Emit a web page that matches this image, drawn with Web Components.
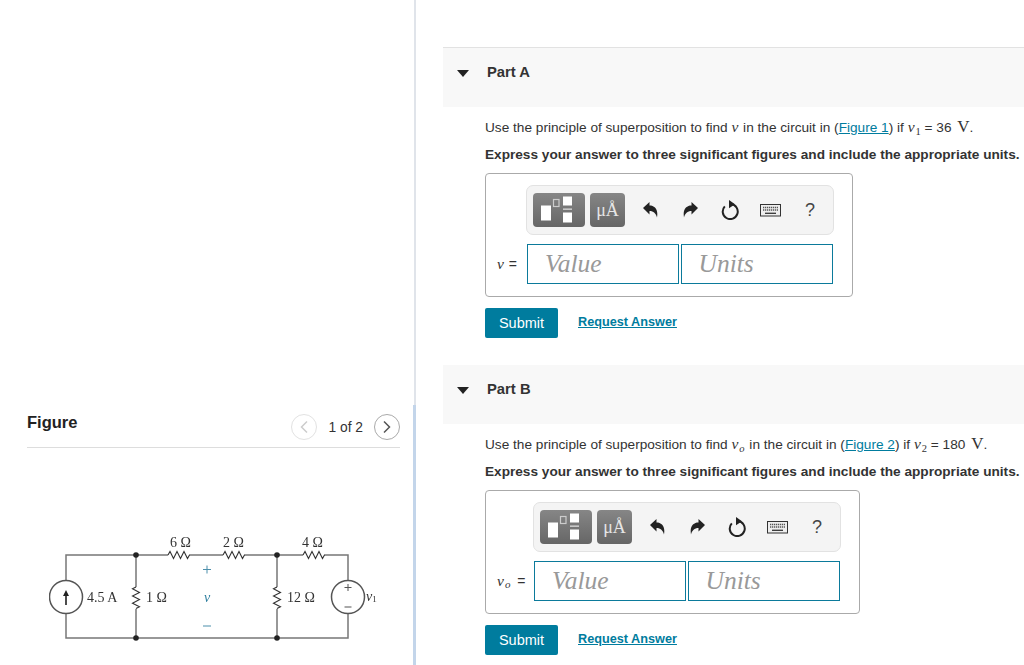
<!DOCTYPE html>
<html>
<head>
<meta charset="utf-8">
<style>
  html, body { margin: 0; height: 100%; overflow: hidden; background: #fff; }
  body { font-family: "Liberation Sans", Arial, sans-serif; }
  #page { display: flex; height: 665px; }
</style>
</head>
<body>
<div id="page">
  <figure-pane></figure-pane>
  <div style="flex:1;min-width:0;overflow:hidden;padding:47px 0 0 27px;">
    <question-part title="Part A" figure="Figure 1" label="v" value="36" src="1"></question-part>
    <question-part title="Part B" figure="Figure 2" label="v" sub="o" value="180" src="2"></question-part>
  </div>
</div>

<script>
const MATH = `"Liberation Serif", "Times New Roman", serif`;

class CircuitDiagram extends HTMLElement {
  constructor() {
    super();
    this.attachShadow({mode: 'open'});
    const zig = (x, y) => `M${x} ${y}l2 -3.5 3.5 7 3.5 -7 3.5 7 3.5 -7 3.5 7 2 -3.5`;
    const zagv = (x, y) => `M${x} ${y}l-3.5 1.8 7 3.6 -7 3.6 7 3.6 -7 3.6 7 3.6 -3.5 1.8`;
    this.shadowRoot.innerHTML = `
      <style>
        :host { display: block; }
        svg { display: block; }
        text { font-family: ${MATH}; fill: #333; font-size: 14px; }
        .blue { fill: #2f7f9f; }
      </style>
      <svg width="415" height="145" viewBox="0 520 415 145">
        <g filter="url(#soft)">
        <g fill="none" stroke="#777" stroke-width="1.5">
          <path d="M66 579V554H168M189 554H223M244 554H303M324 554H348V579.500M348 612.500V637H66V613"/>
          <path d="M136 554V586M136 608V637M277 554V586M277 608V637"/>
          <circle cx="66" cy="596" r="16.500" stroke="#555"/>
          <circle cx="348" cy="596" r="16.500" stroke="#555"/>
        </g>
        <g fill="none" stroke="#333" stroke-width="1.100">
          <path d="${zig(168, 554)}"/>
          <path d="${zig(223, 554)}"/>
          <path d="${zig(303, 554)}"/>
          <path d="${zagv(136, 586)}"/>
          <path d="${zagv(277, 586)}"/>
        </g>
        <g fill="#222">
          <circle cx="136" cy="554" r="2.800"/>
          <circle cx="277" cy="554" r="2.800"/>
          <circle cx="136" cy="637" r="2.800"/>
          <circle cx="277" cy="637" r="2.800"/>
          <path d="M66 589l3 6h-2.200v9h-1.600v-9H63z"/>
        </g>
        <g stroke="#555" stroke-width="1" fill="none">
          <path d="M344.500 586.500h7M348 583v7M344.500 606h7"/>
        </g>
        <g stroke="#4d8fab" stroke-width="1" fill="none">
          <path d="M203 568.500h8M207 564.500v8M203 625h8"/>
        </g>
        <text x="170" y="546">6 Ω</text>
        <text x="223" y="546">2 Ω</text>
        <text x="302" y="546">4 Ω</text>
        <text x="87" y="601">4.5 A</text>
        <text x="146" y="601">1 Ω</text>
        <text x="287" y="601">12 Ω</text>
        <text class="blue" x="204" y="601" font-style="italic">v</text>
        <text x="366" y="600" font-style="italic">v<tspan font-size="9" font-style="normal" dy="1">1</tspan></text>
        </g>
        <defs><filter id="soft" x="0" y="0" width="100%" height="100%"><feGaussianBlur stdDeviation="0.350"/></filter></defs>
      </svg>`;
  }
}
customElements.define('circuit-diagram', CircuitDiagram);

class FigurePane extends HTMLElement {
  constructor() {
    super();
    this.attachShadow({mode: 'open'});
    this.shadowRoot.innerHTML = `
      <style>
        :host {
          display: block;
          flex: none;
          width: 414px;
          height: 665px;
          border-right: 2px solid #e0e4ea;
          position: relative;
        }
        .accent {
          position: absolute;
          right: -2px;
          top: 405px;
          bottom: 0;
          width: 3px;
          background: #c3d5ea;
        }
        .head {
          display: flex;
          align-items: center;
          margin: 411px 14px 0 27px;
          height: 36px;
          border-bottom: 1px solid #ddd;
        }
        h2 {
          margin: 0 auto 0 0;
          font-size: 16.500px;
          font-weight: 700;
          color: #222;
          position: relative;
          top: -7px;
        }
        .pager { display: flex; align-items: center; font-size: 13.800px; color: #333; position: relative; top: -2px; }
        .pager span:nth-child(2) { margin: 0 11px 0 11px; }
        .nav {
          width: 26px;
          height: 26px;
          border-radius: 50%;
          border: 1px solid #aaa;
          box-sizing: border-box;
          display: flex;
          align-items: center;
          justify-content: center;
        }
        .nav.off { border-color: #e2e2e2; }
        svg { display: block; }
      </style>
      <div class="accent"></div>
      <div class="head">
        <h2>Figure</h2>
        <div class="pager">
          <span class="nav off"><svg width="10" height="14"><path d="M8 1.500L2.500 7l5.500 5.500" fill="none" stroke="#ccc" stroke-width="1.500"/></svg></span>
          <span>1 of 2</span>
          <span class="nav"><svg width="10" height="14"><path d="M2 1.500L7.500 7 2 12.500" fill="none" stroke="#555" stroke-width="1.500"/></svg></span>
        </div>
      </div>
      <circuit-diagram style="margin-top:73px"></circuit-diagram>`;
  }
}
customElements.define('figure-pane', FigurePane);

class MathToolbar extends HTMLElement {
  constructor() {
    super();
    this.attachShadow({mode: 'open'});
    this.shadowRoot.innerHTML = `
      <style>
        :host {
          display: flex;
          align-items: center;
          box-sizing: border-box;
          width: 308px;
          height: 50px;
          padding-left: 6px;
          background: #f4f4f4;
          border: 1px solid #e2e2e2;
          border-radius: 7px;
        }
        .btn {
          height: 34px;
          border-radius: 4px;
          background: linear-gradient(#868686, #666);
          display: flex;
          align-items: center;
          justify-content: center;
          flex: none;
        }
        .tpl { width: 52px; margin-right: 5px; }
        .unit { width: 35px; color: #e6e6e6; font: 18px ${MATH}; }
        .tool { flex: none; display: flex; align-items: center; justify-content: center; width: 40px; }
        svg { display: block; }
        .q { font-size: 18px; color: #444; }
      </style>
      <span class="btn tpl">
        <svg width="52" height="34" viewBox="0 0 52 34">
          <rect x="8" y="12.500" width="10" height="15" fill="#fff"/>
          <rect x="20.500" y="6.500" width="5.500" height="7" fill="none" stroke="#ccc" stroke-width="1.200"/>
          <rect x="30" y="3.500" width="9" height="9" fill="#fff"/>
          <rect x="30" y="15.500" width="9" height="1.300" fill="#ddd"/>
          <rect x="30" y="19.500" width="9" height="10" fill="#fff"/>
        </svg>
      </span>
      <span class="btn unit">μÅ</span>
      <span class="tool" style="margin-left:5px"><svg width="15" height="16" viewBox="0 0 15 16"><path d="M0 6L6.500 0V3.500C11.500 3.500 15.500 7 14 15.500 13 11.500 10.500 9 6.500 9V12.500z" fill="#222"/></svg></span>
      <span class="tool"><svg width="15" height="16" viewBox="0 0 15 16"><path d="M15 6L8.500 0V3.500C3.500 3.500-.5 7 1 15.500 2 11.500 4.500 9 8.500 9V12.500z" fill="#222"/></svg></span>
      <span class="tool"><svg width="18" height="20" viewBox="0 0 18 20"><path d="M10 4.100A7.500 7.500 0 1 1 3.800 6.400" fill="none" stroke="#222" stroke-width="2"/><path d="M8 0l6 4.200-6 4z" fill="#222"/></svg></span>
      <span class="tool"><svg width="21" height="13" viewBox="0 0 21 13"><rect x=".5" y=".5" width="20" height="11.500" fill="#eee" stroke="#333"/><path d="M3 3.500h15M3 6h15" stroke="#555" stroke-width="1.300" stroke-dasharray="1.300 .7"/><path d="M5 9.300h11" stroke="#333" stroke-width="1.300"/></svg></span>
      <span class="tool q">?</span>`;
  }
}
customElements.define('math-toolbar', MathToolbar);

class AnswerBox extends HTMLElement {
  static get observedAttributes() {
    return ['sub'];
  }
  constructor() {
    super();
    this.attachShadow({mode: 'open'});
    this.shadowRoot.innerHTML = `
      <style>
        :host {
          display: inline-block;
          box-sizing: border-box;
          height: 124px;
          padding: 11px 17.500px 0 11px;
          border: 1px solid #aaa;
          border-radius: 4px;
          vertical-align: top;
        }
        .row { display: flex; align-items: center; margin-top: 9px; }
        .lab { flex: none; width: 30px; font-size: 14px; color: #333; white-space: nowrap; }
        .lab i { font-family: ${MATH}; font-size: 15.500px; margin-right: 1px; }
        .lab sub { font-size: 11px; font-family: ${MATH}; font-style: italic; line-height: 0; vertical-align: -2px; margin-right: 3px; }
        .lab sub:empty { display: none; }
        .field {
          flex: none;
          box-sizing: border-box;
          width: 152px;
          height: 40px;
          padding-left: 17px;
          border: 1px solid #0b7a9b;
          font: italic 25.500px/38px ${MATH};
          color: #999;
        }
        .field + .field { margin-left: 2px; padding-left: 16.500px; }
        math-toolbar { margin-left: 29px; }
        :host([sub]) math-toolbar { margin-left: 36px; }
        :host([sub]) .lab { width: 37px; }
      </style>
      <math-toolbar></math-toolbar>
      <div class="row">
        <span class="lab"><i>v</i><sub id="s"></sub> =</span>
        <div class="field">Value</div>
        <div class="field">Units</div>
      </div>`;
  }
  attributeChangedCallback(name, oldValue, newValue) {
    this.shadowRoot.getElementById('s').textContent = newValue || '';
  }
}
customElements.define('answer-box', AnswerBox);

class QuestionPart extends HTMLElement {
  constructor() {
    super();
    this.attachShadow({mode: 'open'});
    this.shadowRoot.innerHTML = `
      <style>
        :host { display: block; height: 317px; font-size: 13.650px; color: #333; }
        .top {
          display: flex;
          align-items: flex-start;
          height: 60px;
          padding-top: 16px;
          box-sizing: border-box;
          background: #f8f8f8;
          background-clip: padding-box;
          border-top: 1px solid #e2e2e2;
        }
        :host([title="Part B"]) .top { border-top-color: transparent; }
        .tri {
          margin: 6px 18px 0 14px;
          width: 0;
          height: 0;
          border: 6px solid transparent;
          border-top: 7px solid #222;
          border-bottom: 0;
        }
        h3 { margin: 0; font-size: 14.800px; font-weight: 700; color: #333; line-height: 16px; }
        .body { padding: 11px 0 0 42px; white-space: nowrap; }
        p { margin: 0; line-height: 18px; }
        p.bold { margin-top: 9px; font-weight: 700; font-size: 13.630px; }
        a { color: #007c9e; text-decoration: underline; }
        i { font-family: ${MATH}; font-size: 15.500px; padding-right: 1px; }
        sub { font-family: ${MATH}; font-size: 10.500px; line-height: 0; vertical-align: -3px; }
        .V { font-family: ${MATH}; font-size: 17px; margin-left: 2px; }
        answer-box { margin-top: 9px; }
        .acts { display: flex; align-items: center; margin-top: 11px; }
        .submit {
          box-sizing: border-box;
          width: 73px;
          height: 30px;
          border-radius: 2px;
          background: #007c9e;
          color: #fff;
          font-size: 14.500px;
          line-height: 30px;
          text-align: center;
        }
        .req { margin: -2px 0 0 20px; font-weight: 700; font-size: 12.700px; }
      </style>
      <div class="top"><span class="tri"></span><h3 id="title"></h3></div>
      <div class="body">
        <p id="q"></p>
        <p class="bold">Express your answer to three significant figures and include the appropriate units.</p>
        <answer-box id="box"></answer-box>
        <div class="acts"><div class="submit">Submit</div><a class="req" href="#">Request Answer</a></div>
      </div>`;
  }
  connectedCallback() {
    const a = n => this.getAttribute(n);
    const root = this.shadowRoot;
    root.getElementById('title').textContent = a('title');
    const v = a('sub') ? `<i>v</i><sub><i style="font-size:10.500px">${a('sub')}</i></sub>` : '<i>v</i>';
    root.getElementById('q').innerHTML =
      `Use the principle of superposition to find ${v} in the circuit in (<a href="#">${a('figure')}</a>) if <i>v</i><sub>${a('src')}</sub> = ${a('value')} <span class="V">V</span>.`;
    if (a('sub')) root.getElementById('box').setAttribute('sub', a('sub'));
  }
}
customElements.define('question-part', QuestionPart);
</script>
</body>
</html>
